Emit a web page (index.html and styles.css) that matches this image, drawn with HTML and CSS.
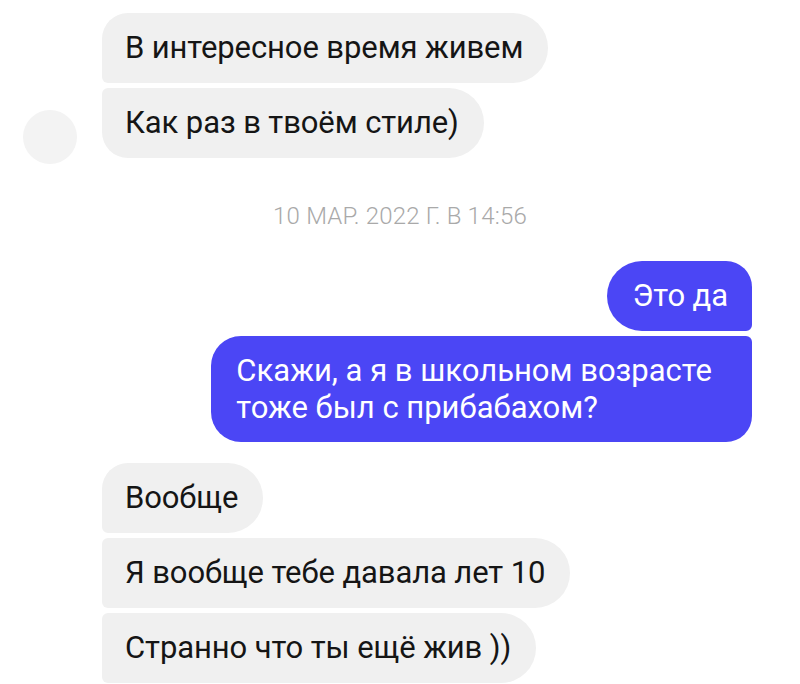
FILE: index.html
```html
<!DOCTYPE html>
<html lang="ru">
<head>
<meta charset="utf-8">
<link rel="stylesheet" href="styles.css">
</head>
<body>
<div class="chat">
  <div class="group in">
    <div class="avatar-col"><div class="avatar"></div></div>
    <div class="bubbles">
      <div class="bubble first">В интересное время живем</div>
      <div class="bubble last">Как раз в твоём стиле)</div>
    </div>
  </div>

  <div class="stamp">10 МАР. 2022 Г. В 14:56</div>

  <div class="group out">
    <div class="bubbles">
      <div class="bubble first">Это да</div>
      <div class="bubble last">Скажи, а я в школьном возрасте<br>тоже был с прибабахом?</div>
    </div>
  </div>

  <div class="group in second">
    <div class="avatar-col"></div>
    <div class="bubbles">
      <div class="bubble first">Вообще</div>
      <div class="bubble mid">Я вообще тебе давала лет 10</div>
      <div class="bubble mid">Странно что ты ещё жив ))</div>
    </div>
  </div>
</div>
</body>
</html>
```

FILE: styles.css
```css
html, body {
  margin: 0;
  padding: 0;
  background: #ffffff;
}

body {
  width: 800px;
  height: 684px;
  overflow: hidden;
  font-family: Roboto, "Noto Sans", sans-serif;
}

.chat {
  padding: 13px 48px 0 23px;
  display: flex;
  flex-direction: column;
}

.group {
  display: flex;
}

.group.in {
  align-items: flex-end;
}

.group.out {
  justify-content: flex-end;
}

.avatar-col {
  width: 54px;
  margin-right: 25px;
  flex: none;
}

.avatar {
  width: 54px;
  height: 54px;
  border-radius: 50%;
  background: #f3f3f3;
  margin-bottom: -6px;
}

.bubbles {
  display: flex;
  flex-direction: column;
  gap: 5px;
}

.in .bubbles {
  align-items: flex-start;
}

.out .bubbles {
  align-items: flex-end;
}

.bubble {
  font-size: 31px;
  line-height: 36px;
  padding: 17px 25px 17px 23px;
  letter-spacing: -0.1px;
}

.in .bubble {
  background: #f0f0f0;
  color: #151515;
  border-radius: 6px 35px 35px 6px;
}

.in .bubble.first {
  border-top-left-radius: 26px;
}

.in .bubble.last {
  border-bottom-left-radius: 26px;
}

.out .bubble {
  background: #4b46f5;
  color: #ffffff;
  border-radius: 35px 6px 6px 35px;
  padding: 17px 24px 17px 25px;
}

.out .bubble.first {
  border-top-right-radius: 26px;
}

.out .bubble.last {
  border-bottom-right-radius: 26px;
  border-top-left-radius: 30px;
  border-bottom-left-radius: 30px;
  line-height: 37px;
  padding: 16px 40px 16px 25px;
  letter-spacing: 0;
}

.stamp {
  text-align: center;
  color: #a9a9a9;
  font-size: 24px;
  font-weight: 300;
  letter-spacing: 0.2px;
  line-height: 24px;
  margin: 46px -25px 33px 0;
}

.group.second {
  margin-top: 21px;
}
```
